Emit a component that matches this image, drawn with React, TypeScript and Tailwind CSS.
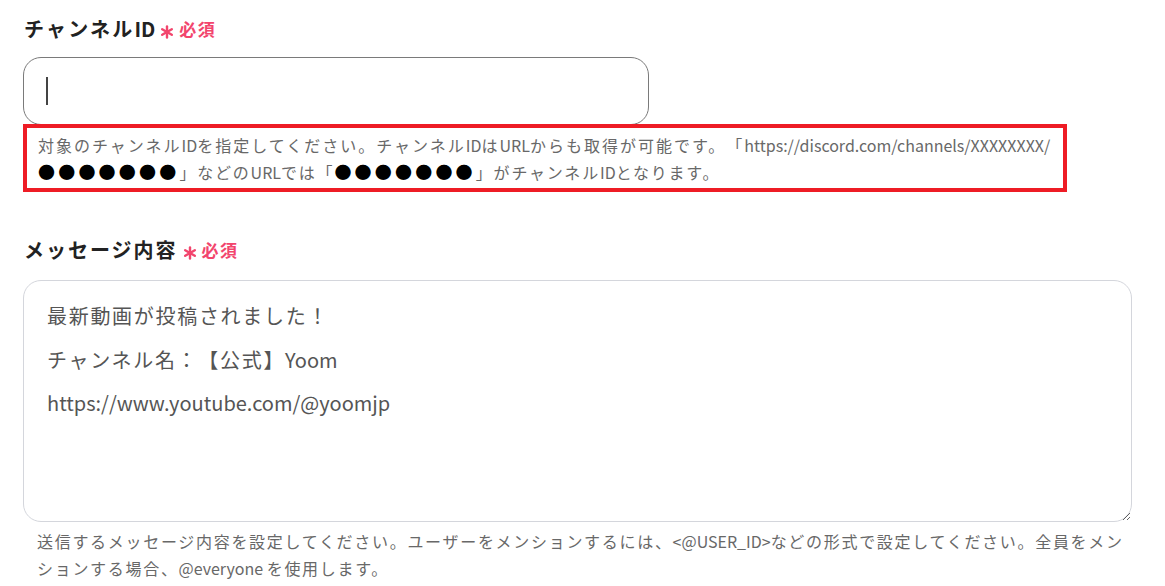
import React from "react";

const font = { fontFamily: '"Noto Sans CJK JP", "Noto Sans", sans-serif' };

// widen full-width runs so they take the same room as in the original
const cjk = /([\u3000-\u30ff\u4e00-\u9fff\uff00-\uffef●]+)/;

const Spaced: React.FC<{ text: string; wide: string }> = ({ text, wide }) => (
  <>
    {text.split(cjk).map((part, i) =>
      cjk.test(part) ? (
        <span key={i} className={wide}>
          {part}
        </span>
      ) : (
        <React.Fragment key={i}>{part}</React.Fragment>
      )
    )}
  </>
);

const Required: React.FC = () => (
  <span className="ml-[5px] inline-flex items-center text-[17px] font-bold text-[#f2456d]">
    <svg width="14" height="14" viewBox="0 0 14 14" className="mr-[5px] translate-y-[3px]">
      <g stroke="currentColor" strokeWidth="2.4" strokeLinecap="round">
        <line x1="7" y1="1.5" x2="7" y2="12.5" />
        <line x1="2.2" y1="4.2" x2="11.8" y2="9.8" />
        <line x1="2.2" y1="9.8" x2="11.8" y2="4.2" />
      </g>
    </svg>
    <span className="tracking-[1.5px]">必須</span>
  </span>
);

const App: React.FC = () => {
  const lines = [
    "最新動画が投稿されました！",
    "チャンネル名：【公式】Yoom",
    "https://www.youtube.com/@yoomjp",
  ];

  return (
    <div
      className="w-[1165px] h-[586px] bg-white overflow-hidden [text-spacing-trim:space-all]"
      style={font}
    >
      <div className="pt-[14px] pl-[23px] pr-[33px]">
        <div className="flex items-center pl-[1px] h-[30px]">
          <span className="text-[20px] font-bold text-[#222]">
            <Spaced text="チャンネルID" wide="tracking-[2.2px]" />
          </span>
          <Required />
        </div>

        <div className="mt-[13px] w-[626px] h-[68px] rounded-[18px] border border-[#7a7a7a] flex items-center pl-[22px]">
          <div className="w-[2px] h-[28px] bg-[#444]" />
        </div>

        <div className="-mt-[1px] w-[1044px] border-[4px] border-[#ee1c25] pl-[11px] pt-[4px] pb-[2px] text-[16px] leading-[27px] text-[#686868]">
          <Spaced
            text="対象のチャンネルIDを指定してください。チャンネルIDはURLからも取得が可能です。「https://discord.com/channels/XXXXXXXX/"
            wide="tracking-[2px]"
          />
          <br />
          <span className="text-black text-[17px] leading-none tracking-[3.2px]">●●●●●●●</span>
          <Spaced text="」などのURLでは「" wide="tracking-[1.8px]" />
          <span className="text-black text-[17px] leading-none tracking-[3.2px]">●●●●●●●</span>
          <Spaced text="」がチャンネルIDとなります。" wide="tracking-[1.8px]" />
        </div>

        <div className="mt-[43px] flex items-center pl-[1px] h-[30px]">
          <span className="text-[20px] font-bold text-[#222]">
            <Spaced text="メッセージ内容" wide="tracking-[2px]" />
          </span>
          <Required />
        </div>

        <div className="mt-[15px] w-[1109px] h-[242px] rounded-[18px] border border-[#d4d6dc] pl-[23px] pt-[13px] text-[20px] leading-[43.5px] text-[#555] overflow-auto resize-y">
          {lines.map((l) => (
            <div key={l}>
              <Spaced text={l} wide="tracking-[1.7px]" />
            </div>
          ))}
        </div>

        <div className="mt-[6px] pl-[14px] text-[16px] leading-[27px] text-[#686868]">
          <Spaced
            text="送信するメッセージ内容を設定してください。ユーザーをメンションするには、<@USER_ID>などの形式で設定してください。全員をメン"
            wide="tracking-[1.7px]"
          />
          <br />
          <Spaced text="ションする場合、@everyone を使用します。" wide="tracking-[1.7px]" />
        </div>
      </div>
    </div>
  );
};

export default App;
